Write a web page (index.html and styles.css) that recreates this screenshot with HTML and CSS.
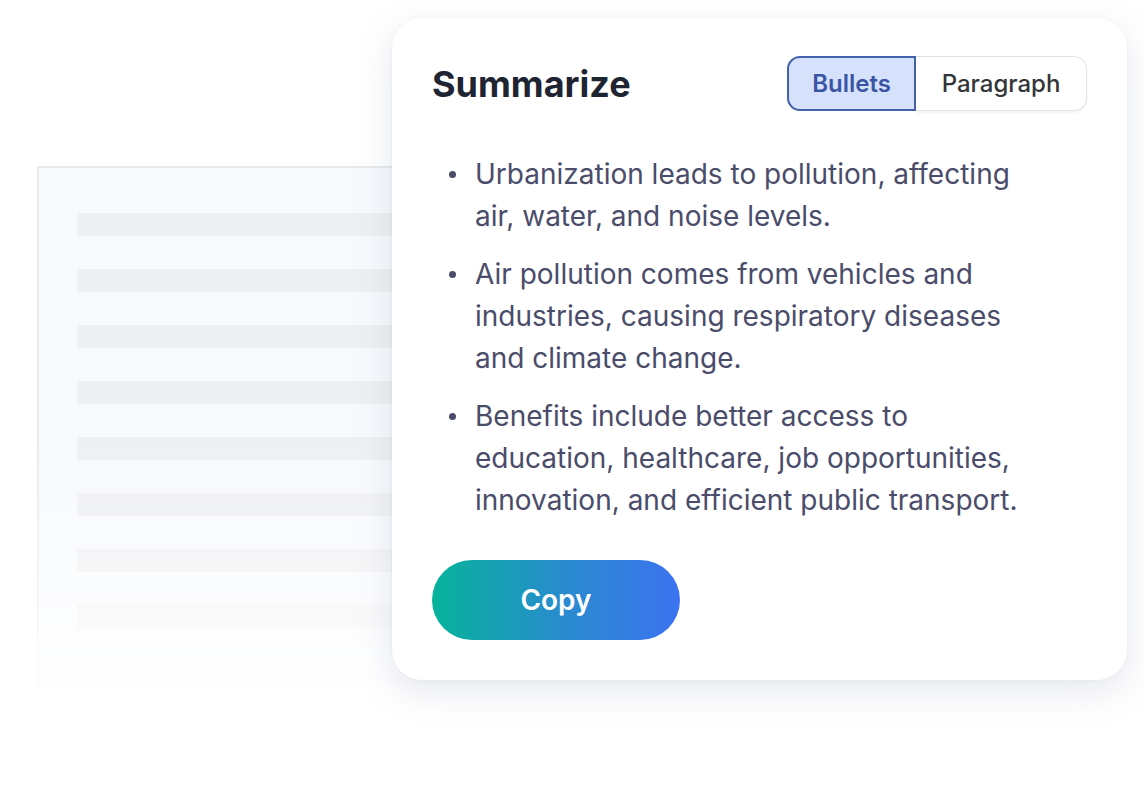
FILE: index.html
```html
<!DOCTYPE html>
<html lang="en">
<head>
<meta charset="utf-8">
<title>Summarize</title>
<link rel="stylesheet" href="styles.css">
</head>
<body>
<div class="stage">
  <div class="doc">
    <div class="doc-line"></div>
    <div class="doc-line"></div>
    <div class="doc-line"></div>
    <div class="doc-line"></div>
    <div class="doc-line"></div>
    <div class="doc-line"></div>
    <div class="doc-line"></div>
    <div class="doc-line"></div>
  </div>
  <div class="card">
    <div class="card-head">
      <h1 class="title">Summarize</h1>
      <div class="toggle">
        <button class="seg seg-active">Bullets</button>
        <button class="seg">Paragraph</button>
      </div>
    </div>
    <ul class="points">
      <li>Urbanization leads to pollution, affecting air, water, and noise levels.</li>
      <li>Air pollution comes from vehicles and industries, causing respiratory diseases and climate change.</li>
      <li>Benefits include better access to education, healthcare, job opportunities, innovation, and efficient public transport.</li>
    </ul>
    <button class="copy">Copy</button>
  </div>
</div>
</body>
</html>
```

FILE: styles.css
```css
* { box-sizing: border-box; }
html, body { margin: 0; padding: 0; background: #ffffff; }
body {
  font-family: Inter, "Noto Sans", "Liberation Sans", sans-serif;
  width: 1144px;
  height: 800px;
  overflow: hidden;
}
.stage {
  position: relative;
  width: 1144px;
  height: 800px;
  padding: 18px 0 0 392px;
}
.doc {
  position: absolute;
  left: 37px;
  top: 166px;
  width: 640px;
  height: 540px;
  background: #f7f9fd;
  border-top: 2px solid #e6e8ec;
  border-left: 2px solid #e8eaee;
  box-shadow: -10px 0 24px rgba(200, 206, 220, 0.25);
  padding: 45px 0 0 38px;
  display: flex;
  flex-direction: column;
  gap: 33px;
  -webkit-mask-image: linear-gradient(to bottom, #000 0%, #000 50%, rgba(0,0,0,0.4) 82%, transparent 100%);
  mask-image: linear-gradient(to bottom, #000 0%, #000 50%, rgba(0,0,0,0.4) 82%, transparent 100%);
}
.doc-line {
  height: 23px;
  width: 560px;
  background: #eeeff1;
}
.card {
  position: relative;
  width: 735px;
  height: 662px;
  background: #ffffff;
  border-radius: 30px;
  box-shadow: 0 12px 36px rgba(150, 160, 185, 0.24), 0 0 3px rgba(150, 160, 185, 0.12);
  padding: 38px 40px 40px 40px;
  display: flex;
  flex-direction: column;
}
.card-head {
  display: flex;
  align-items: center;
  justify-content: space-between;
  height: 55px;
}
.title {
  margin: 0;
  font-size: 36px;
  font-weight: 700;
  color: #1f2433;
}
.toggle {
  display: flex;
  height: 55px;
}
.seg {
  font-family: inherit;
  font-size: 24px;
  font-weight: 500;
  height: 55px;
  margin: 0;
  padding: 0;
  cursor: pointer;
  background: #ffffff;
  color: #333538;
  border: 1.5px solid #e2e3e6;
  border-left: none;
  border-radius: 0 13px 13px 0;
  width: 171px;
  box-shadow: 0 2px 3px rgba(0,0,0,0.05);
}
.seg-active {
  width: 129px;
  background: #d6e2fc;
  color: #3a55a4;
  font-weight: 600;
  border: 2px solid #4461a8;
  border-radius: 13px 0 0 13px;
  box-shadow: none;
}
.points {
  margin: 42px 0 0 0;
  padding: 0 0 0 43px;
  width: 600px;
  color: #4a4c6a;
  font-size: 28px;
  line-height: 42px;
  list-style: none;
}
.points li {
  position: relative;
  margin: 0 0 16px 0;
}
.points li::before {
  content: "";
  position: absolute;
  left: -26px;
  top: 18px;
  width: 7px;
  height: 7px;
  border-radius: 50%;
  background: #4a4c6a;
}
.points li:last-child { margin-bottom: 0; }
.copy {
  margin-top: 39px;
  width: 248px;
  height: 80px;
  border: none;
  border-radius: 40px;
  background: linear-gradient(90deg, #06b39a 0%, #2a8ad0 55%, #3c73f0 100%);
  color: #ffffff;
  font-family: inherit;
  font-size: 28px;
  font-weight: 600;
  cursor: pointer;
}
```
